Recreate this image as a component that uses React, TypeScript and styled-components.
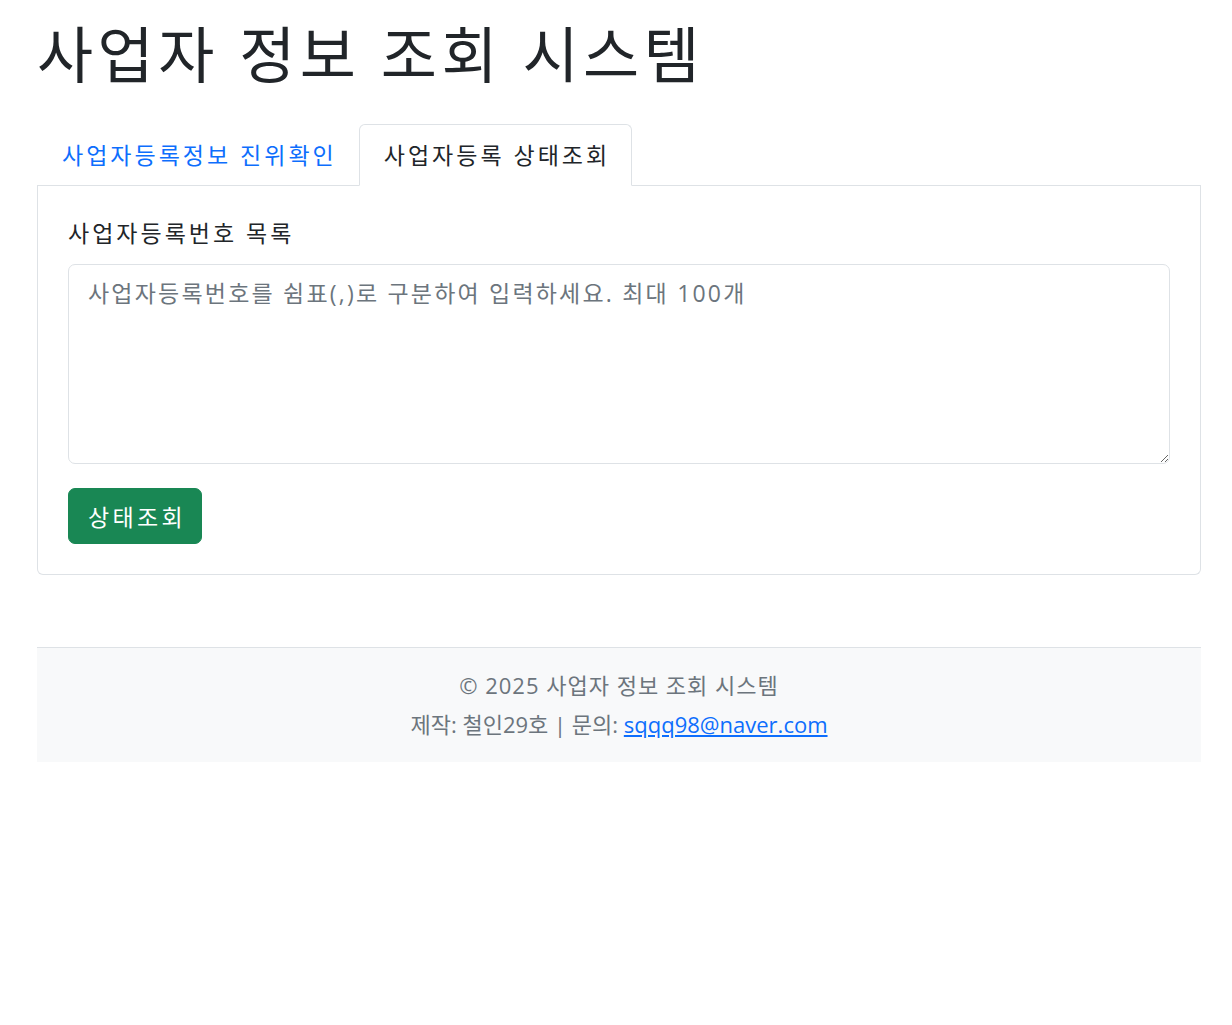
import React, { useState } from 'react'
import styled, { createGlobalStyle } from 'styled-components'

const GlobalStyle = createGlobalStyle`
  html, body {
    margin: 0;
    padding: 0;
    background: #fff;
    color: #212529;
    font-family: "Open Sans", "Noto Sans CJK KR", sans-serif;
  }
  * { box-sizing: border-box; }
`

const Page = styled.div`
  width: 1164px;
  margin-left: 37px;
  padding-top: 18px;
`

const Title = styled.h1`
  margin: 0 0 33px;
  font-size: 61px;
  font-weight: 400;
  line-height: 73px;
  letter-spacing: 4.5px;
  color: #212529;
`

const Tabs = styled.div`
  display: flex;
  border-bottom: 1px solid #dee2e6;
`

const Tab = styled.button<{ $active?: boolean }>`
  font-family: inherit;
  font-size: 23px;
  line-height: 34px;
  letter-spacing: 3px;
  padding: 13px 21px 13px 24px;
  margin-bottom: -1px;
  background: ${p => (p.$active ? '#fff' : 'transparent')};
  color: ${p => (p.$active ? '#212529' : '#0d6efd')};
  border: 1px solid ${p => (p.$active ? '#dee2e6' : 'transparent')};
  border-bottom-color: ${p => (p.$active ? '#fff' : 'transparent')};
  border-radius: 6px 6px 0 0;
  cursor: pointer;
`

const Panel = styled.div`
  border: 1px solid #dee2e6;
  border-top: none;
  border-radius: 0 0 6px 6px;
  padding: 30px;
`

const Label = styled.label`
  display: block;
  font-size: 23px;
  line-height: 34px;
  letter-spacing: 3px;
  margin-bottom: 14px;
  color: #212529;
`

const TextArea = styled.textarea`
  display: block;
  width: 100%;
  height: 200px;
  padding: 11px 19px;
  font-family: inherit;
  font-size: 23px;
  line-height: 34px;
  letter-spacing: 2.2px;
  color: #212529;
  border: 1px solid #dee2e6;
  border-radius: 7px;
  outline: none;
  resize: vertical;
  &::placeholder {
    color: #6c757d;
  }
`

const SubmitButton = styled.button`
  margin-top: 24px;
  height: 56px;
  padding: 0 15px 0 19px;
  font-family: inherit;
  font-size: 23px;
  letter-spacing: 3.3px;
  color: #fff;
  background: #198754;
  border: 1px solid #198754;
  border-radius: 7px;
  cursor: pointer;
`

const Footer = styled.footer`
  margin-top: 72px;
  border-top: 1px solid #dee2e6;
  background: #f8f9fa;
  padding: 18px 0;
  text-align: center;
  color: #6c757d;
  font-size: 22px;
  line-height: 39px;
`

const FooterLine = styled.div<{ $spacing?: number }>`
  letter-spacing: ${p => p.$spacing ?? 0}px;
`

const MailLink = styled.a`
  color: #0d6efd;
  text-decoration: underline;
`

export default function App() {
  const [tab, setTab] = useState(1)
  return (
    <>
      <GlobalStyle />
      <Page>
        <Title>사업자 정보 조회 시스템</Title>
        <Tabs>
          <Tab $active={tab === 0} onClick={() => setTab(0)}>사업자등록정보 진위확인</Tab>
          <Tab $active={tab === 1} onClick={() => setTab(1)}>사업자등록 상태조회</Tab>
        </Tabs>
        <Panel>
          <Label>사업자등록번호 목록</Label>
          <TextArea placeholder="사업자등록번호를 쉼표(,)로 구분하여 입력하세요. 최대 100개" />
          <SubmitButton>상태조회</SubmitButton>
        </Panel>
        <Footer>
          <FooterLine $spacing={1}>© 2025 사업자 정보 조회 시스템</FooterLine>
          <FooterLine>
            제작: 철인29호 | 문의: <MailLink href="#">sqqq98@naver.com</MailLink>
          </FooterLine>
        </Footer>
      </Page>
    </>
  )
}
